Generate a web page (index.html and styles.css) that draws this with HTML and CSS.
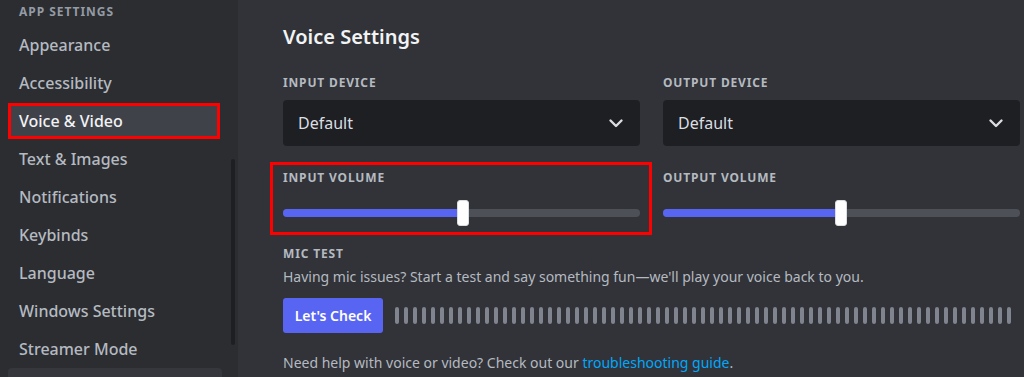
FILE: index.html
```html
<!DOCTYPE html>
<html lang="en">
<head>
    <meta charset="UTF-8">
    <title>Voice &amp; Video</title>
    <link rel="stylesheet" href="styles.css">
</head>
<body>
    <nav class="sidebar">
        <div class="side-header">App Settings</div>
        <div class="side-item">Appearance</div>
        <div class="side-item">Accessibility</div>
        <div class="side-item selected">Voice &amp; Video</div>
        <div class="side-item">Text &amp; Images</div>
        <div class="side-item">Notifications</div>
        <div class="side-item">Keybinds</div>
        <div class="side-item">Language</div>
        <div class="side-item">Windows Settings</div>
        <div class="side-item">Streamer Mode</div>
        <div class="side-item hover"></div>
        <div class="scrollbar"></div>
    </nav>

    <main class="content">
        <h2 class="title">Voice Settings</h2>

        <div class="columns">
            <div class="field">
                <div class="label">Input Device</div>
                <div class="select">
                    <span>Default</span>
                    <svg width="24" height="24" viewBox="0 0 24 24"><polyline points="6.5,9.5 12,15 17.5,9.5" fill="none" stroke="#dbdee1" stroke-width="2.4" stroke-linecap="round" stroke-linejoin="round"/></svg>
                </div>
            </div>
            <div class="field">
                <div class="label">Output Device</div>
                <div class="select">
                    <span>Default</span>
                    <svg width="24" height="24" viewBox="0 0 24 24"><polyline points="6.5,9.5 12,15 17.5,9.5" fill="none" stroke="#dbdee1" stroke-width="2.4" stroke-linecap="round" stroke-linejoin="round"/></svg>
                </div>
            </div>
        </div>

        <div class="columns volumes">
            <div class="field highlighted">
                <div class="label">Input Volume</div>
                <div class="slider">
                    <div class="track"><div class="fill" style="width: 50%"></div></div>
                    <div class="thumb" style="left: 50%"></div>
                </div>
            </div>
            <div class="field">
                <div class="label">Output Volume</div>
                <div class="slider">
                    <div class="track"><div class="fill" style="width: 49.7%"></div></div>
                    <div class="thumb" style="left: 49.7%"></div>
                </div>
            </div>
        </div>

        <div class="label mic-label">Mic Test</div>
        <p class="desc">Having mic issues? Start a test and say something fun—we'll play your voice back to you.</p>
        <div class="mic-row">
            <button class="btn">Let's Check</button>
            <div class="meter">
                <span></span><span></span><span></span><span></span><span></span><span></span><span></span><span></span><span></span><span></span>
                <span></span><span></span><span></span><span></span><span></span><span></span><span></span><span></span><span></span><span></span>
                <span></span><span></span><span></span><span></span><span></span><span></span><span></span><span></span><span></span><span></span>
                <span></span><span></span><span></span><span></span><span></span><span></span><span></span><span></span><span></span><span></span>
                <span></span><span></span><span></span><span></span><span></span><span></span><span></span><span></span><span></span><span></span>
                <span></span><span></span><span></span><span></span><span></span><span></span><span></span><span></span><span></span><span></span>
                <span></span><span></span><span></span><span></span><span></span><span></span><span></span><span></span><span></span>
            </div>
        </div>
        <p class="help">Need help with voice or video? Check out our <a href="#">troubleshooting guide</a>.</p>
    </main>
</body>
</html>
```

FILE: styles.css
```css
body {
    margin: 0;
    padding: 0;
    height: 377px;
    overflow: hidden;
    display: flex;
    font-family: 'Noto Sans', 'Open Sans', sans-serif;
    background-color: #313338;
    color: #dbdee1;
}

.sidebar {
    position: relative;
    width: 238px;
    height: 377px;
    flex-shrink: 0;
    overflow: hidden;
    background-color: #2b2d31;
    padding-top: 4px;
    box-sizing: border-box;
}

.side-header {
    margin-left: 19px;
    font-size: 12px;
    line-height: 16px;
    font-weight: 700;
    text-transform: uppercase;
    color: #949ba4;
    letter-spacing: 0.08em;
    margin-bottom: 10px;
}

.side-item {
    width: 206px;
    height: 30px;
    margin: 0 0 8px 11px;
    padding-left: 8px;
    box-sizing: border-box;
    border-radius: 4px;
    font-size: 16px;
    line-height: 30px;
    font-weight: 500;
    color: #b5bac1;
}

.side-item.selected {
    background-color: #404249;
    color: #f2f3f5;
    outline: 3px solid #f00;
    border-radius: 0;
}

.side-item.hover {
    width: 214px;
    height: 34px;
    margin: -4px 0 0 8px;
    background-color: #35373c;
}

.scrollbar {
    position: absolute;
    left: 231px;
    top: 159px;
    width: 4px;
    height: 186px;
    border-radius: 2px;
    background-color: #1e1f22;
}

.content {
    flex: 1;
    padding: 25px 4px 0 45px;
}

.title {
    margin: 0 0 26px;
    font-size: 20px;
    line-height: 24px;
    font-weight: 600;
    color: #f2f3f5;
}

.columns {
    display: grid;
    grid-template-columns: 1fr 1fr;
    gap: 23px;
}

.label {
    font-size: 12px;
    line-height: 16px;
    font-weight: 700;
    text-transform: uppercase;
    color: #b5bac1;
    letter-spacing: 0.07em;
}

.select {
    margin-top: 9px;
    height: 46px;
    display: flex;
    align-items: center;
    justify-content: space-between;
    padding: 0 12px 0 15px;
    background-color: #1e1f22;
    border-radius: 4px;
    font-size: 16px;
    color: #dbdee1;
}

.volumes {
    margin-top: 24px;
}

.field {
    position: relative;
}

.highlighted::after {
    content: '';
    position: absolute;
    top: -8px;
    bottom: -9px;
    left: -13px;
    right: -12px;
    border: 3px solid #f00;
}

.slider {
    position: relative;
    height: 26px;
    margin-top: 14px;
    display: flex;
    align-items: center;
}

.track {
    width: 100%;
    height: 8px;
    border-radius: 4px;
    background-color: #4e5058;
    overflow: hidden;
}

.fill {
    height: 100%;
    background-color: #5865f2;
}

.thumb {
    position: absolute;
    top: 0;
    width: 10px;
    height: 24px;
    margin-left: -5px;
    border-radius: 3px;
    background-color: #fff;
    border: 1px solid #dbdee1;
}

.mic-label {
    margin-top: 20px;
}

.desc {
    margin: 6px 0 0;
    font-size: 14px;
    line-height: 18px;
    color: #b5bac1;
}

.mic-row {
    display: flex;
    align-items: center;
    margin-top: 12px;
}

.btn {
    height: 35px;
    width: 100px;
    border: none;
    border-radius: 3px;
    background-color: #5865f2;
    color: #fff;
    font-family: inherit;
    font-size: 14px;
    font-weight: 600;
    cursor: pointer;
}

.meter {
    display: flex;
    gap: 5px;
    margin-left: 12px;
    overflow: hidden;
}

.meter span {
    flex-shrink: 0;
    width: 4px;
    height: 17px;
    border-radius: 2px;
    background-color: #80848e;
}

.help {
    margin: 21px 0 0;
    font-size: 14px;
    line-height: 18px;
    color: #b5bac1;
}

.help a {
    color: #00a8fc;
    text-decoration: none;
}
```
